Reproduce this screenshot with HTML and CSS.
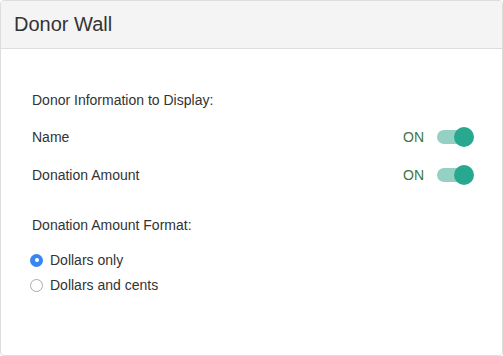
FILE: index.html
```html
<!DOCTYPE html>
<html lang="en">
<head>
  <meta charset="UTF-8" />
  <title>Donor Wall</title>
  <link rel="stylesheet" href="styles.css">
</head>
<body>

  <div class="panel">
    <div class="panel-heading">Donor Wall</div>
    <div class="panel-body">
      <div class="section-title">Donor Information to Display:</div>

      <div class="toggle-row first">
        <span class="row-label">Name</span>
        <span class="toggle-state">ON</span>
        <span class="switch on"><span class="knob"></span></span>
      </div>

      <div class="toggle-row">
        <span class="row-label">Donation Amount</span>
        <span class="toggle-state">ON</span>
        <span class="switch on"><span class="knob"></span></span>
      </div>

      <div class="section-title format">Donation Amount Format:</div>

      <label class="radio-row first">
        <span class="radio checked"></span>
        Dollars only
      </label>
      <label class="radio-row">
        <span class="radio"></span>
        Dollars and cents
      </label>
    </div>
  </div>

</body>
</html>
```

FILE: styles.css
```css
body {
  margin: 0;
  font-family: "Liberation Sans", Arial, sans-serif;
  color: #333;
  background: #fff;
}

.panel {
  width: 503px;
  height: 356px;
  box-sizing: border-box;
  border: 1px solid #ddd;
  border-radius: 4px;
  overflow: hidden;
}

.panel-heading {
  height: 47px;
  line-height: 47px;
  padding: 0 13px;
  background: #f4f4f4;
  border-bottom: 1px solid #ddd;
  font-size: 20px;
  color: #333;
}

.panel-body {
  padding: 41px 31px 0 31px;
  font-size: 14px;
  line-height: 20px;
}

.section-title.format {
  margin-top: 30px;
}

.toggle-row {
  display: flex;
  align-items: center;
  height: 20px;
  margin-top: 18px;
}

.toggle-row.first {
  margin-top: 17px;
}

.row-label {
  flex: 1;
}

.toggle-state {
  color: #3c763d;
  margin-right: 13px;
}

.switch {
  position: relative;
  width: 34px;
  height: 14px;
  border-radius: 7px;
  background: #94d0c3;
}

.switch .knob {
  position: absolute;
  top: -3px;
  right: -3px;
  width: 20px;
  height: 20px;
  border-radius: 50%;
  background: #27a88f;
}

.radio-row {
  display: flex;
  align-items: center;
  gap: 7px;
  margin-top: 5px;
  margin-left: -2px;
}

.radio-row.first {
  margin-top: 15px;
}

.radio {
  width: 13px;
  height: 13px;
  box-sizing: border-box;
  border-radius: 50%;
  border: 1px solid #aaa;
  background: #fff;
  position: relative;
}

.radio.checked {
  border: none;
  background: #3a86f0;
}

.radio.checked::after {
  content: "";
  position: absolute;
  left: 4.5px;
  top: 4.5px;
  width: 4px;
  height: 4px;
  border-radius: 50%;
  background: #fff;
}
```
